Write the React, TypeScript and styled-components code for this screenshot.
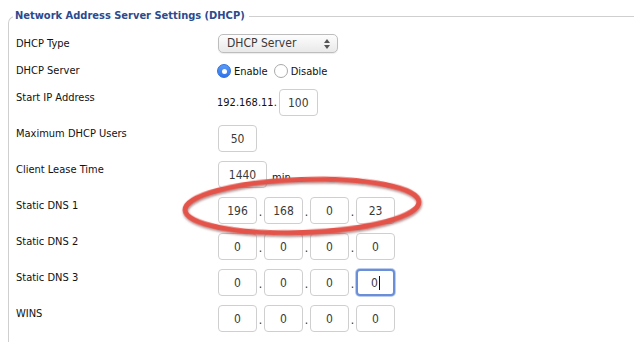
import React from 'react'
import styled, { createGlobalStyle, css } from 'styled-components'

const GlobalStyle = createGlobalStyle`
  html, body {
    margin: 0;
    padding: 0;
    background: #fff;
    overflow: hidden;
  }
  body {
    font-family: "DejaVu Sans Condensed", "DejaVu Sans", "Liberation Sans", sans-serif;
    color: #111;
  }
`

const Page = styled.div`
  position: relative;
  width: 634px;
  height: 342px;
  padding: 8px 0 0 8px;
  box-sizing: border-box;
  overflow: hidden;
`

// the group box runs off the right and bottom edges of the shot
const Fieldset = styled.fieldset`
  margin: 0;
  width: 626px;
  height: 334px;
  box-sizing: border-box;
  border: 1px solid #cfcfcf;
  border-right: none;
  border-bottom: none;
  border-radius: 7px 0 0 0;
  padding: 10px 0 0 7px;
`

const Legend = styled.legend`
  padding: 0 4px 0 2px;
  margin-left: -3px;
  font-size: 11px;
  line-height: 16px;
  font-weight: bold;
  color: #2c4a8e;
`

const Form = styled.div`
  display: flex;
  flex-direction: column;
  gap: 9px;
`

const Row = styled.div<{ $tight?: boolean }>`
  display: grid;
  grid-template-columns: 202px auto;
  align-items: ${({ $tight }) => ($tight ? 'center' : 'start')};
  margin-bottom: ${({ $tight }) => ($tight ? '1px' : '0')};
`

const Label = styled.div<{ $drop?: number }>`
  font-size: 11px;
  line-height: 16px;
  color: #111;
  margin-top: ${({ $drop }) => $drop ?? 0}px;
`

const Controls = styled.div`
  display: flex;
  align-items: center;
  font-size: 11px;
  color: #111;
`

const Select = styled.div`
  position: relative;
  width: 120px;
  height: 19px;
  box-sizing: border-box;
  border: 1px solid #bdbdbd;
  border-radius: 5px;
  background: linear-gradient(#fdfdfd, #e9e9e9);
  box-shadow: 0 1px 1px rgba(0, 0, 0, 0.08);
  padding-left: 8px;
  font-size: 12px;
  line-height: 17px;
  color: #3a3a3a;
`

const SelectArrows = styled.svg`
  position: absolute;
  right: 7px;
  top: 4px;
`

const RadioGroup = styled.label`
  display: flex;
  align-items: center;
  gap: 3px;
  margin-right: 7px;
  font-size: 11px;
  margin-left: -1px;
`

const RadioDot = styled.span<{ $on?: boolean }>`
  width: 14px;
  height: 14px;
  border-radius: 50%;
  box-sizing: border-box;
  display: flex;
  align-items: center;
  justify-content: center;
  ${({ $on }) =>
    $on
      ? css`
          background: linear-gradient(#5a9bf8, #2f74ec);
          border: 1px solid #2e6fdc;
          &::after {
            content: '';
            width: 5px;
            height: 5px;
            border-radius: 50%;
            background: #fff;
          }
        `
      : css`
          background: #fff;
          border: 1px solid #a9a9a9;
        `}
`

const Prefix = styled.span`
  margin-left: -1px;
  margin-right: 2px;
  font-size: 11px;
`

const Field = styled.div<{ $w?: number; $focused?: boolean }>`
  width: ${({ $w }) => $w ?? 39}px;
  height: 27px;
  box-sizing: border-box;
  border: 1px solid #cfcfcf;
  border-radius: 4px;
  display: flex;
  align-items: center;
  justify-content: center;
  font-size: 12px;
  color: #3a3a3a;
  background: #fff;
  ${({ $focused }) =>
    $focused &&
    css`
      border: 2px solid #6a8fd8;
      box-shadow: 0 0 0 1px rgba(106, 143, 216, 0.45);
      &::after {
        content: '';
        width: 1px;
        height: 14px;
        margin-left: 1px;
        background: #111;
      }
    `}
`

const Dot = styled.span`
  width: 7px;
  text-align: center;
  font-size: 12px;
  align-self: flex-end;
  padding-bottom: 5px;
  color: #333;
`

const Unit = styled.span`
  margin-left: 5px;
  margin-top: 5px;
  font-size: 11px;
`

const Marker = styled.svg`
  position: absolute;
  left: 178px;
  top: 170px;
  pointer-events: none;
  overflow: visible;
`

function IpFields({ values, focusLast }: { values: string[]; focusLast?: boolean }) {
  return (
    <Controls>
      {values.map((v, i) => (
        <React.Fragment key={i}>
          {i > 0 && <Dot>.</Dot>}
          <Field $focused={focusLast && i === values.length - 1}>{v}</Field>
        </React.Fragment>
      ))}
    </Controls>
  )
}

export default function App() {
  return (
    <Page>
      <GlobalStyle />
      <Fieldset>
        <Legend>Network Address Server Settings (DHCP)</Legend>
        <Form>
          <Row $tight>
            <Label>DHCP Type</Label>
            <Controls>
              <Select>
                DHCP Server
                <SelectArrows width="6" height="10" viewBox="0 0 6 10">
                  <path d="M3 0 L6 4 L0 4 Z" fill="#555" />
                  <path d="M0 6 L6 6 L3 10 Z" fill="#555" />
                </SelectArrows>
              </Select>
            </Controls>
          </Row>
          <Row $tight>
            <Label>DHCP Server</Label>
            <Controls>
              <RadioGroup>
                <RadioDot $on />
                Enable
              </RadioGroup>
              <RadioGroup>
                <RadioDot />
                Disable
              </RadioGroup>
            </Controls>
          </Row>
          <Row>
            <Label $drop={1}>Start IP Address</Label>
            <Controls>
              <Prefix>192.168.11.</Prefix>
              <Field>100</Field>
            </Controls>
          </Row>
          <Row>
            <Label $drop={1}>Maximum DHCP Users</Label>
            <Controls>
              <Field>50</Field>
            </Controls>
          </Row>
          <Row>
            <Label $drop={1}>Client Lease Time</Label>
            <Controls>
              <Field $w={49}>1440</Field>
              <Unit>min</Unit>
            </Controls>
          </Row>
          <Row>
            <Label $drop={1}>Static DNS 1</Label>
            <IpFields values={['196', '168', '0', '23']} />
          </Row>
          <Row>
            <Label $drop={1}>Static DNS 2</Label>
            <IpFields values={['0', '0', '0', '0']} />
          </Row>
          <Row>
            <Label $drop={1}>Static DNS 3</Label>
            <IpFields values={['0', '0', '0', '0']} focusLast />
          </Row>
          <Row>
            <Label $drop={1}>WINS</Label>
            <IpFields values={['0', '0', '0', '0']} />
          </Row>
        </Form>
      </Fieldset>
      <Marker width="250" height="72" viewBox="0 0 250 72">
        <defs>
          <filter id="sh" x="-10%" y="-30%" width="120%" height="160%">
            <feDropShadow dx="0.5" dy="1.5" stdDeviation="1.2" floodColor="#5a1410" floodOpacity="0.55" />
          </filter>
        </defs>
        <ellipse
          cx="124"
          cy="36"
          rx="117"
          ry="26.5"
          transform="rotate(-2 124 36)"
          fill="none"
          stroke="#e4534a"
          strokeWidth="5"
          filter="url(#sh)"
        />
      </Marker>
    </Page>
  )
}
